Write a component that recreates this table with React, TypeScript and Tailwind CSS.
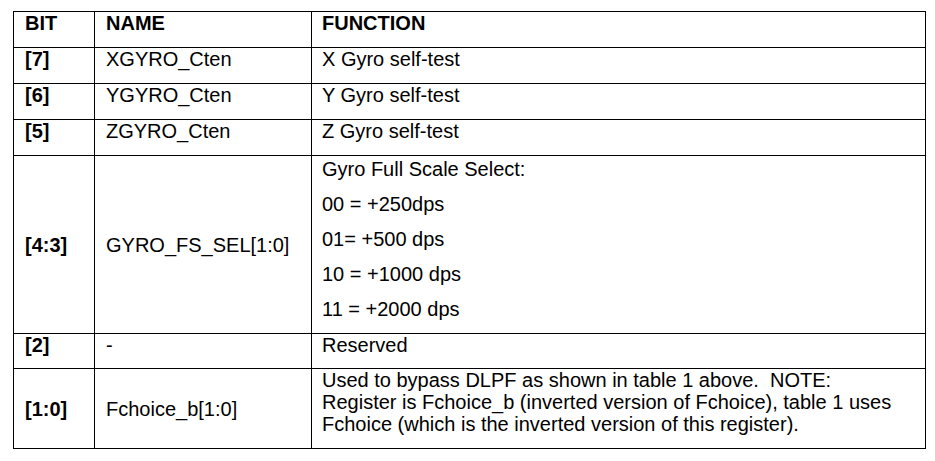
import React from "react";

type Row = {
  bit: string;
  name: string;
  fn: string[];
  h: string;
  kind?: "list" | "wrap";
};

const rows: Row[] = [
  { bit: "[7]", name: "XGYRO_Cten", fn: ["X Gyro self-test"], h: "h-[36px]" },
  { bit: "[6]", name: "YGYRO_Cten", fn: ["Y Gyro self-test"], h: "h-[36px]" },
  { bit: "[5]", name: "ZGYRO_Cten", fn: ["Z Gyro self-test"], h: "h-[36px]" },
  {
    bit: "[4:3]",
    name: "GYRO_FS_SEL[1:0]",
    fn: [
      "Gyro Full Scale Select:",
      "00 = +250dps",
      "01= +500 dps",
      "10 = +1000 dps",
      "11 = +2000 dps",
    ],
    h: "h-[176px]",
    kind: "list",
  },
  { bit: "[2]", name: "-", fn: ["Reserved"], h: "h-[35px]" },
  {
    bit: "[1:0]",
    name: "Fchoice_b[1:0]",
    fn: [
      "Used to bypass DLPF as shown in table 1 above.  NOTE:",
      "Register is Fchoice_b (inverted version of Fchoice), table 1 uses",
      "Fchoice (which is the inverted version of this register).",
    ],
    h: "h-[80px]",
    kind: "wrap",
  },
];

export default function App() {
  return (
    <div className="w-[935px] h-[461px] bg-white pt-[11px] pl-[13px] text-black font-['Liberation_Sans',Arial,sans-serif] text-[20px]">
      <table className="table-fixed border-collapse w-[913px]">
        <colgroup>
          <col className="w-[81px]" />
          <col className="w-[217px]" />
          <col />
        </colgroup>
        <thead>
          <tr className="h-[36px]">
            <th className="border border-black text-left align-top font-bold px-[11px] pt-0 leading-[22px]">BIT</th>
            <th className="border border-black text-left align-top font-bold px-[11px] pt-0 leading-[22px]">NAME</th>
            <th className="border border-black text-left align-top font-bold px-[10px] pt-0 leading-[22px]">FUNCTION</th>
          </tr>
        </thead>
        <tbody>
          {rows.map((r) => {
            const mid = r.kind !== undefined;
            return (
              <tr key={r.bit} className={r.h}>
                <td className={`border border-black px-[11px] font-bold leading-[22px] ${mid ? "align-middle" : "align-top"}`}>
                  {r.bit}
                </td>
                <td className={`border border-black px-[11px] leading-[22px] ${mid ? "align-middle" : "align-top"}`}>
                  {r.name}
                </td>
                <td className="border border-black px-[10px] align-top whitespace-pre">
                  {r.kind === "list" ? (
                    <div className="pt-[2px]">
                      {r.fn.map((l) => (
                        <div key={l} className="h-[35px] leading-[22px]">{l}</div>
                      ))}
                    </div>
                  ) : r.kind === "wrap" ? (
                    <div className="pt-0 leading-[22px]">
                      {r.fn.map((l) => (
                        <div key={l}>{l}</div>
                      ))}
                    </div>
                  ) : (
                    <div className="leading-[22px]">{r.fn[0]}</div>
                  )}
                </td>
              </tr>
            );
          })}
        </tbody>
      </table>
    </div>
  );
}
